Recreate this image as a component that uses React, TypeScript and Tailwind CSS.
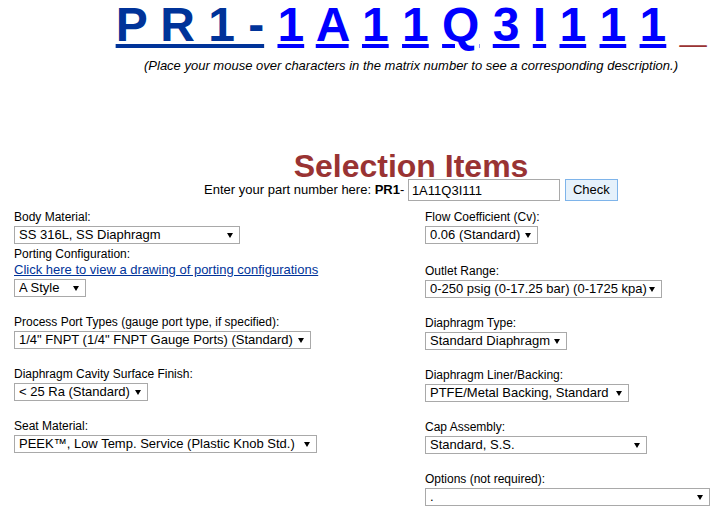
import { Fragment } from "react";

const MATRIX = ["1", "A", "1", "1", "Q", "3", "I", "1", "1", "1"];

function Select({ value, width }: { value: string; width: string }) {
  return (
    <div className={`relative mt-[1px] ${width}`}>
      <select
        defaultValue={value}
        className="block h-[18px] w-full appearance-none rounded-none border border-[#a9a9a9] bg-white pl-[4px] text-[13px] leading-[16px] text-black outline-none"
      >
        <option>{value}</option>
      </select>
      <svg className="pointer-events-none absolute right-[7px] top-[7px]" width="6" height="5" viewBox="0 0 6 5">
        <polygon points="0,0 6,0 3,5" fill="#000" />
      </svg>
    </div>
  );
}

function Field({ label, value, width, className = "" }: { label: string; value: string; width: string; className?: string }) {
  return (
    <div className={className}>
      <div className="text-[12px] leading-[15px]">{label}</div>
      <Select value={value} width={width} />
    </div>
  );
}

export default function App() {
  return (
    <div className="min-h-[511px] w-full bg-white font-['Liberation_Sans',Arial,sans-serif] text-black">
      {/* Header: matrix number */}
      <div className="pl-[104px] text-center">
        <div className="whitespace-nowrap pt-[1px] text-[48px] font-bold leading-[48px]">
          <span className="text-[#003399] underline">P R 1 -</span>{" "}
          {MATRIX.map((c, i) => (
            <Fragment key={i}>
              <a href="#" className="text-[#0000ff] underline">
                {c}
              </a>{" "}
            </Fragment>
          ))}
          <span className="text-[#993333]">_</span>
        </div>
        <p className="mt-[9px] text-[13px] italic leading-[15px]">
          (Place your mouse over characters in the matrix number to see a corresponding description.)
        </p>

        <h1 className="mt-[79px] text-[32px] font-bold leading-[28px] text-[#993333]">Selection Items</h1>
        <div className="-mt-[1px] flex items-center justify-center text-[13px]">
          <span className="whitespace-pre">
            Enter your part number here: <b>PR1</b>-{" "}
          </span>
          <input
            defaultValue="1A11Q3I111"
            className="h-[22px] w-[152px] border border-[#a9a9a9] px-[3px] text-[13px] text-black outline-none"
          />
          <button className="ml-[5px] h-[22px] w-[53px] border border-[#7eb4ea] bg-[#e5f1fb] text-[13px] text-black">
            Check
          </button>
        </div>
      </div>

      {/* Form */}
      <div className="mt-[9px] flex pl-[14px]">
        <div className="w-[411px]">
          <Field label="Body Material:" value="SS 316L, SS Diaphragm" width="w-[226px]" />
          <div className="mt-[3px]">
            <div className="text-[12px] leading-[15px]">Porting Configuration:</div>
            <a href="#" className="block text-[13px] leading-[16px] text-[#003399] underline">
              Click here to view a drawing of porting configurations
            </a>
            <div className="mt-[1px]">
              <Select value="A Style" width="w-[72px]" />
            </div>
          </div>
          <Field
            className="mt-[18px]"
            label="Process Port Types (gauge port type, if specified):"
            value={'1/4" FNPT (1/4" FNPT Gauge Ports) (Standard)'}
            width="w-[297px]"
          />
          <Field className="mt-[18px]" label="Diaphragm Cavity Surface Finish:" value="< 25 Ra (Standard)" width="w-[134px]" />
          <Field
            className="mt-[18px]"
            label="Seat Material:"
            value="PEEK™, Low Temp. Service (Plastic Knob Std.)"
            width="w-[303px]"
          />
        </div>

        <div>
          <Field label="Flow Coefficient (Cv):" value="0.06 (Standard)" width="w-[113px]" />
          <Field
            className="mt-[20px]"
            label="Outlet Range:"
            value="0-250 psig (0-17.25 bar) (0-1725 kpa)"
            width="w-[237px]"
          />
          <Field className="mt-[18px]" label="Diaphragm Type:" value="Standard Diaphragm" width="w-[142px]" />
          <Field
            className="mt-[18px]"
            label="Diaphragm Liner/Backing:"
            value="PTFE/Metal Backing, Standard"
            width="w-[204px]"
          />
          <Field className="mt-[18px]" label="Cap Assembly:" value="Standard, S.S." width="w-[222px]" />
          <Field className="mt-[18px]" label="Options (not required):" value="." width="w-[285px]" />
        </div>
      </div>
    </div>
  );
}
